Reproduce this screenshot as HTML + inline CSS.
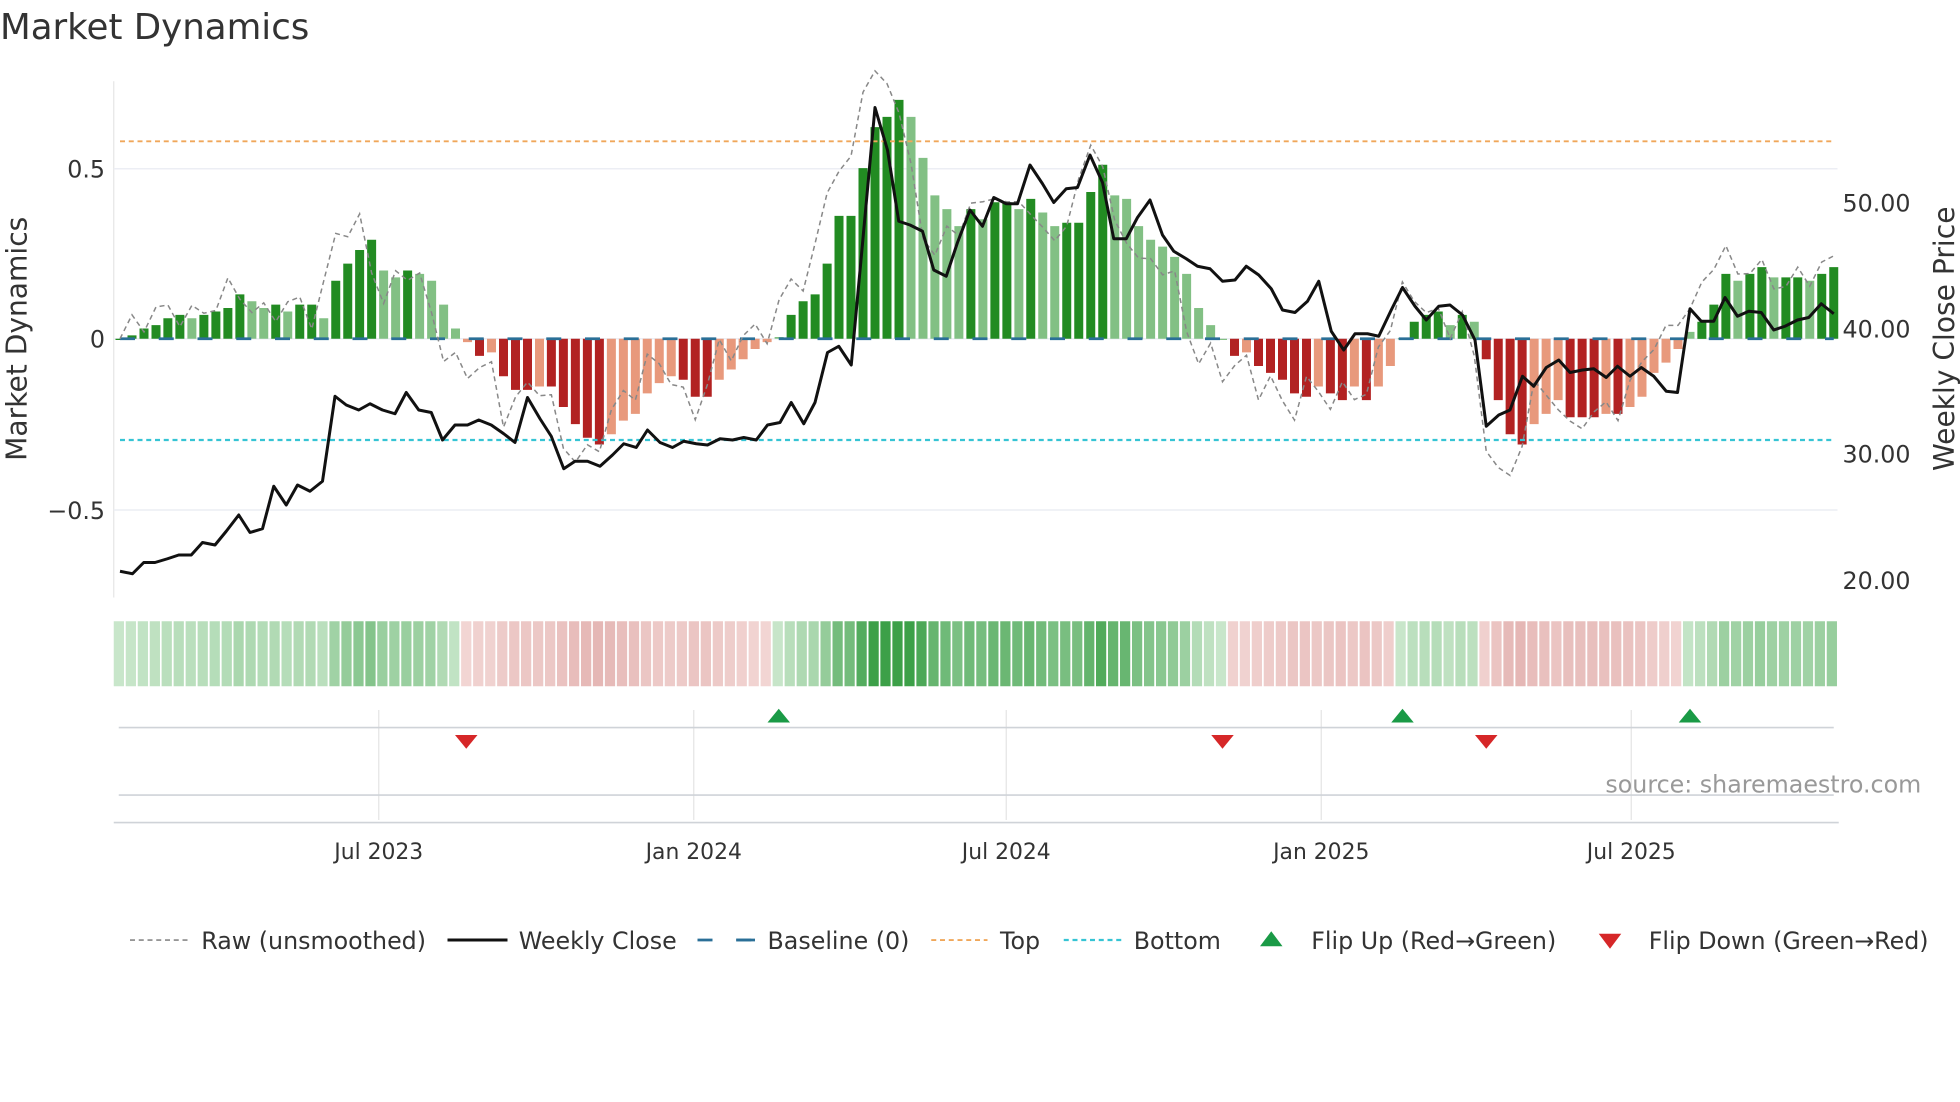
<!DOCTYPE html>
<html><head><meta charset="utf-8"><style>
html,body{margin:0;padding:0;background:#fff;}
svg{display:block;font-family:"DejaVu Sans","Liberation Sans",sans-serif;}
</style></head><body>
<svg id="s" width="1960" height="1102" viewBox="0 0 1568 881.6" preserveAspectRatio="none" xmlns="http://www.w3.org/2000/svg">
<text x="0" y="31" font-size="28.5" fill="#333">Market Dynamics</text>
<line x1="91" y1="65" x2="91" y2="478" stroke="#e6e6e6" stroke-width="1"/>
<line x1="91" y1="135" x2="1470" y2="135" stroke="#eceef4" stroke-width="1.2"/>
<line x1="91" y1="408" x2="1470" y2="408" stroke="#eceef4" stroke-width="1.2"/>
<line x1="91" y1="271" x2="1470" y2="271" stroke="#eceef4" stroke-width="1.2"/>
<g id="bars"></g>
<line x1="96" y1="113" x2="1467" y2="113" stroke="#f0a75a" stroke-width="1.5" stroke-dasharray="4,3"/>
<line x1="96" y1="352" x2="1467" y2="352" stroke="#35c4d4" stroke-width="1.8" stroke-dasharray="4,3"/>
<line x1="96" y1="271" x2="1467" y2="271" stroke="#2a6f97" stroke-width="2.2" stroke-dasharray="12,19"/>
<polyline id="raw" points="0,0" fill="none" stroke="#888" stroke-width="1.2" stroke-dasharray="4,3"/>
<polyline id="price" points="0,0" fill="none" stroke="#111" stroke-width="2.4" stroke-linejoin="round"/>
<g font-size="19" fill="#333">
<text x="84" y="142" text-anchor="end">0.5</text>
<text x="84" y="278" text-anchor="end">0</text>
<text x="84" y="415" text-anchor="end">−0.5</text>
<text x="1474" y="169">50.00</text>
<text x="1474" y="270">40.00</text>
<text x="1474" y="370">30.00</text>
<text x="1474" y="471">20.00</text>
</g>
<text transform="translate(21,271) rotate(-90)" text-anchor="middle" font-size="22.5" fill="#333">Market Dynamics</text>
<text transform="translate(1563,271) rotate(-90)" text-anchor="middle" font-size="22.5" fill="#333">Weekly Close Price</text>
<g id="heat"></g>
<g stroke="#e4e4e4" stroke-width="1">
<line x1="303" y1="568" x2="303" y2="656"/><line x1="555" y1="568" x2="555" y2="656"/><line x1="805" y1="568" x2="805" y2="656"/><line x1="1057" y1="568" x2="1057" y2="656"/><line x1="1305" y1="568" x2="1305" y2="656"/>
</g>
<line x1="95" y1="582" x2="1467" y2="582" stroke="#cfd3d8" stroke-width="1.3"/>
<line x1="95" y1="636" x2="1467" y2="636" stroke="#cfd3d8" stroke-width="1.3"/>
<line x1="91" y1="658" x2="1471" y2="658" stroke="#cfd3d8" stroke-width="1.3"/>
<g fill="#1a9a46"><path d="M614 578L623 567L632 578Z"/><path d="M1113 578L1122 567L1131 578Z"/><path d="M1343 578L1352 567L1361 578Z"/></g>
<g fill="#d62728"><path d="M364 588L382 588L373 599Z"/><path d="M969 588L987 588L978 599Z"/><path d="M1180 588L1198 588L1189 599Z"/></g>
<text x="1537" y="634" text-anchor="end" font-size="19" fill="#999">source: sharemaestro.com</text>
<g font-size="17.5" fill="#333" text-anchor="middle">
<text x="303" y="687">Jul 2023</text><text x="555" y="687">Jan 2024</text><text x="805" y="687">Jul 2024</text><text x="1057" y="687">Jan 2025</text><text x="1305" y="687">Jul 2025</text>
</g>
<g font-size="19" fill="#333">
<line x1="104" y1="752" x2="150" y2="752" stroke="#888" stroke-width="1.3" stroke-dasharray="4,3"/><text x="161" y="759">Raw (unsmoothed)</text>
<line x1="358" y1="752" x2="406" y2="752" stroke="#111" stroke-width="2.4"/><text x="415" y="759">Weekly Close</text>
<line x1="558" y1="752" x2="604" y2="752" stroke="#2a6f97" stroke-width="2.2" stroke-dasharray="12,19"/><line x1="589" y1="752" x2="604" y2="752" stroke="#2a6f97" stroke-width="2.2"/><text x="614" y="759">Baseline (0)</text>
<line x1="745" y1="752" x2="790" y2="752" stroke="#f0a75a" stroke-width="1.5" stroke-dasharray="4,3"/><text x="800" y="759">Top</text>
<line x1="851" y1="752" x2="897" y2="752" stroke="#35c4d4" stroke-width="1.8" stroke-dasharray="4,3"/><text x="907" y="759">Bottom</text>
<path d="M1008 757L1017 745L1026 757Z" fill="#1a9a46"/><text x="1049" y="759">Flip Up (Red→Green)</text>
<path d="M1279 747L1297 747L1288 759Z" fill="#d62728"/><text x="1319" y="759">Flip Down (Green→Red)</text>
</g>
</svg>
<script>
(function(){
var NS="http://www.w3.org/2000/svg";
function R(g,x,y,w,h,f){var r=document.createElementNS(NS,"rect");r.setAttribute("x",x.toFixed(1));r.setAttribute("y",y.toFixed(1));r.setAttribute("width",w.toFixed(2));r.setAttribute("height",h.toFixed(1));r.setAttribute("fill",f);g.appendChild(r);}
var v=[0,0.01,0.03,0.04,0.06,0.07,0.06,0.07,0.08,0.09,0.13,0.11,0.09,0.1,0.08,0.1,0.1,0.06,0.17,0.22,0.26,0.29,
0.2,0.18,0.2,0.19,0.17,0.1,0.03,-0.01,
-0.05,-0.04,-0.11,-0.15,-0.15,-0.14,-0.14,-0.2,-0.25,-0.29,-0.31,-0.28,-0.24,-0.22,-0.16,-0.13,-0.11,-0.12,-0.17,-0.17,-0.12,-0.09,-0.06,-0.03,-0.01,
0.005,0.07,0.11,0.13,0.22,0.36,0.36,0.5,0.62,0.65,0.70,0.65,0.53,0.42,0.38,0.33,0.38,0.35,0.4,0.4,0.38,0.41,0.37,0.33,0.34,0.34,0.43,0.51,0.42,0.41,0.33,0.29,0.27,0.24,0.19,0.09,0.04,0,
-0.05,-0.04,-0.08,-0.1,-0.12,-0.16,-0.17,-0.14,-0.16,-0.18,-0.14,-0.18,-0.14,-0.08,0.002,
0.05,0.07,0.08,0.04,0.07,0.05,
-0.06,-0.18,-0.28,-0.31,-0.25,-0.22,-0.18,-0.23,-0.23,-0.23,-0.22,-0.22,-0.2,-0.17,-0.1,-0.07,-0.03,
0.02,0.05,0.1,0.19,0.17,0.19,0.21,0.18,0.18,0.18,0.17,0.19,0.21];
var N=v.length,x0=96,x1=1467,dx=(x1-x0)/(N-1),Z=271,K=273,raw=[];
var gb=document.getElementById("bars"),gh=document.getElementById("heat");
for(var i=0;i<N;i++){var x=x0+i*dx,a=v[i],p=i?v[i-1]:0,dark=Math.abs(a)>=Math.abs(p);
var c=a>=0?(dark?"#228b22":"#82c084"):(dark?"#b22222":"#e8997c");
var y=Z-a*K,top=Math.min(y,Z),hh=Math.abs(a)*K;if(hh<1)hh=1;
R(gb,x-3.6,top,7.2,hh,c);
var t=Math.min(1,Math.abs(a)/0.6),col=a>=0?"rgb("+Math.round(200-140*t)+","+Math.round(230-70*t)+","+Math.round(202-130*t)+")":"rgb("+Math.round(242-25*t)+","+Math.round(214-60*t)+","+Math.round(212-60*t)+")";
R(gh,91+i*(1380/N),497,1380/N-1.4,52,col);
var n=(i>0&&i<N-1)?(v[i+1]-v[i-1])*1.0:0;raw.push(x.toFixed(1)+","+(Z-(a+n+0.04*Math.sin(i*2.3))*K).toFixed(1));}
document.getElementById("raw").setAttribute("points",raw.join(" "));
var P=[96,457,106,459,115,450,124,450,134,447,143,444,153,444,162,434,172,436,181,425,191,412,200,426,210,423,219,389,229,404,238,388,248,393,258,385,268,317,277,324,287,328,296,323,306,328,316,331,325,314,335,328,345,330,354,352,364,340,374,340,383,336,393,340,403,347,412,354,422,318,432,335,441,349,451,375,460,369,470,369,480,373,490,364,499,355,509,358,518,344,528,354,538,358,547,353,557,355,566,356,576,351,586,352,595,350,605,352,614,340,624,338,633,322,643,339,652,322,662,282,671,277,681,292,690,195,700,86,710,120,719,177,728,180,738,185,747,216,757,221,766,194,776,168,786,181,795,158,805,163,814,163,824,132,834,147,843,162,853,151,862,150,872,124,882,146,891,191,901,191,910,174,920,160,930,188,939,201,949,207,958,213,968,215,978,225,988,224,997,213,1007,220,1017,231,1026,248,1036,250,1046,241,1055,225,1065,265,1075,280,1084,267,1094,267,1103,269,1113,248,1122,230,1132,245,1141,256,1151,245,1160,244,1170,252,1180,272,1189,341,1199,332,1208,328,1218,301,1227,309,1237,294,1247,288,1256,298,1266,296,1275,295,1285,302,1294,293,1304,301,1313,294,1323,301,1333,313,1342,314,1352,247,1361,257,1371,257,1380,238,1390,253,1399,249,1409,250,1419,264,1428,261,1438,256,1447,254,1457,243,1467,251];
var pp=[];for(var j=0;j<P.length;j+=2)pp.push(P[j]+","+P[j+1]);
document.getElementById("price").setAttribute("points",pp.join(" "));
})();
</script>
</body></html>
